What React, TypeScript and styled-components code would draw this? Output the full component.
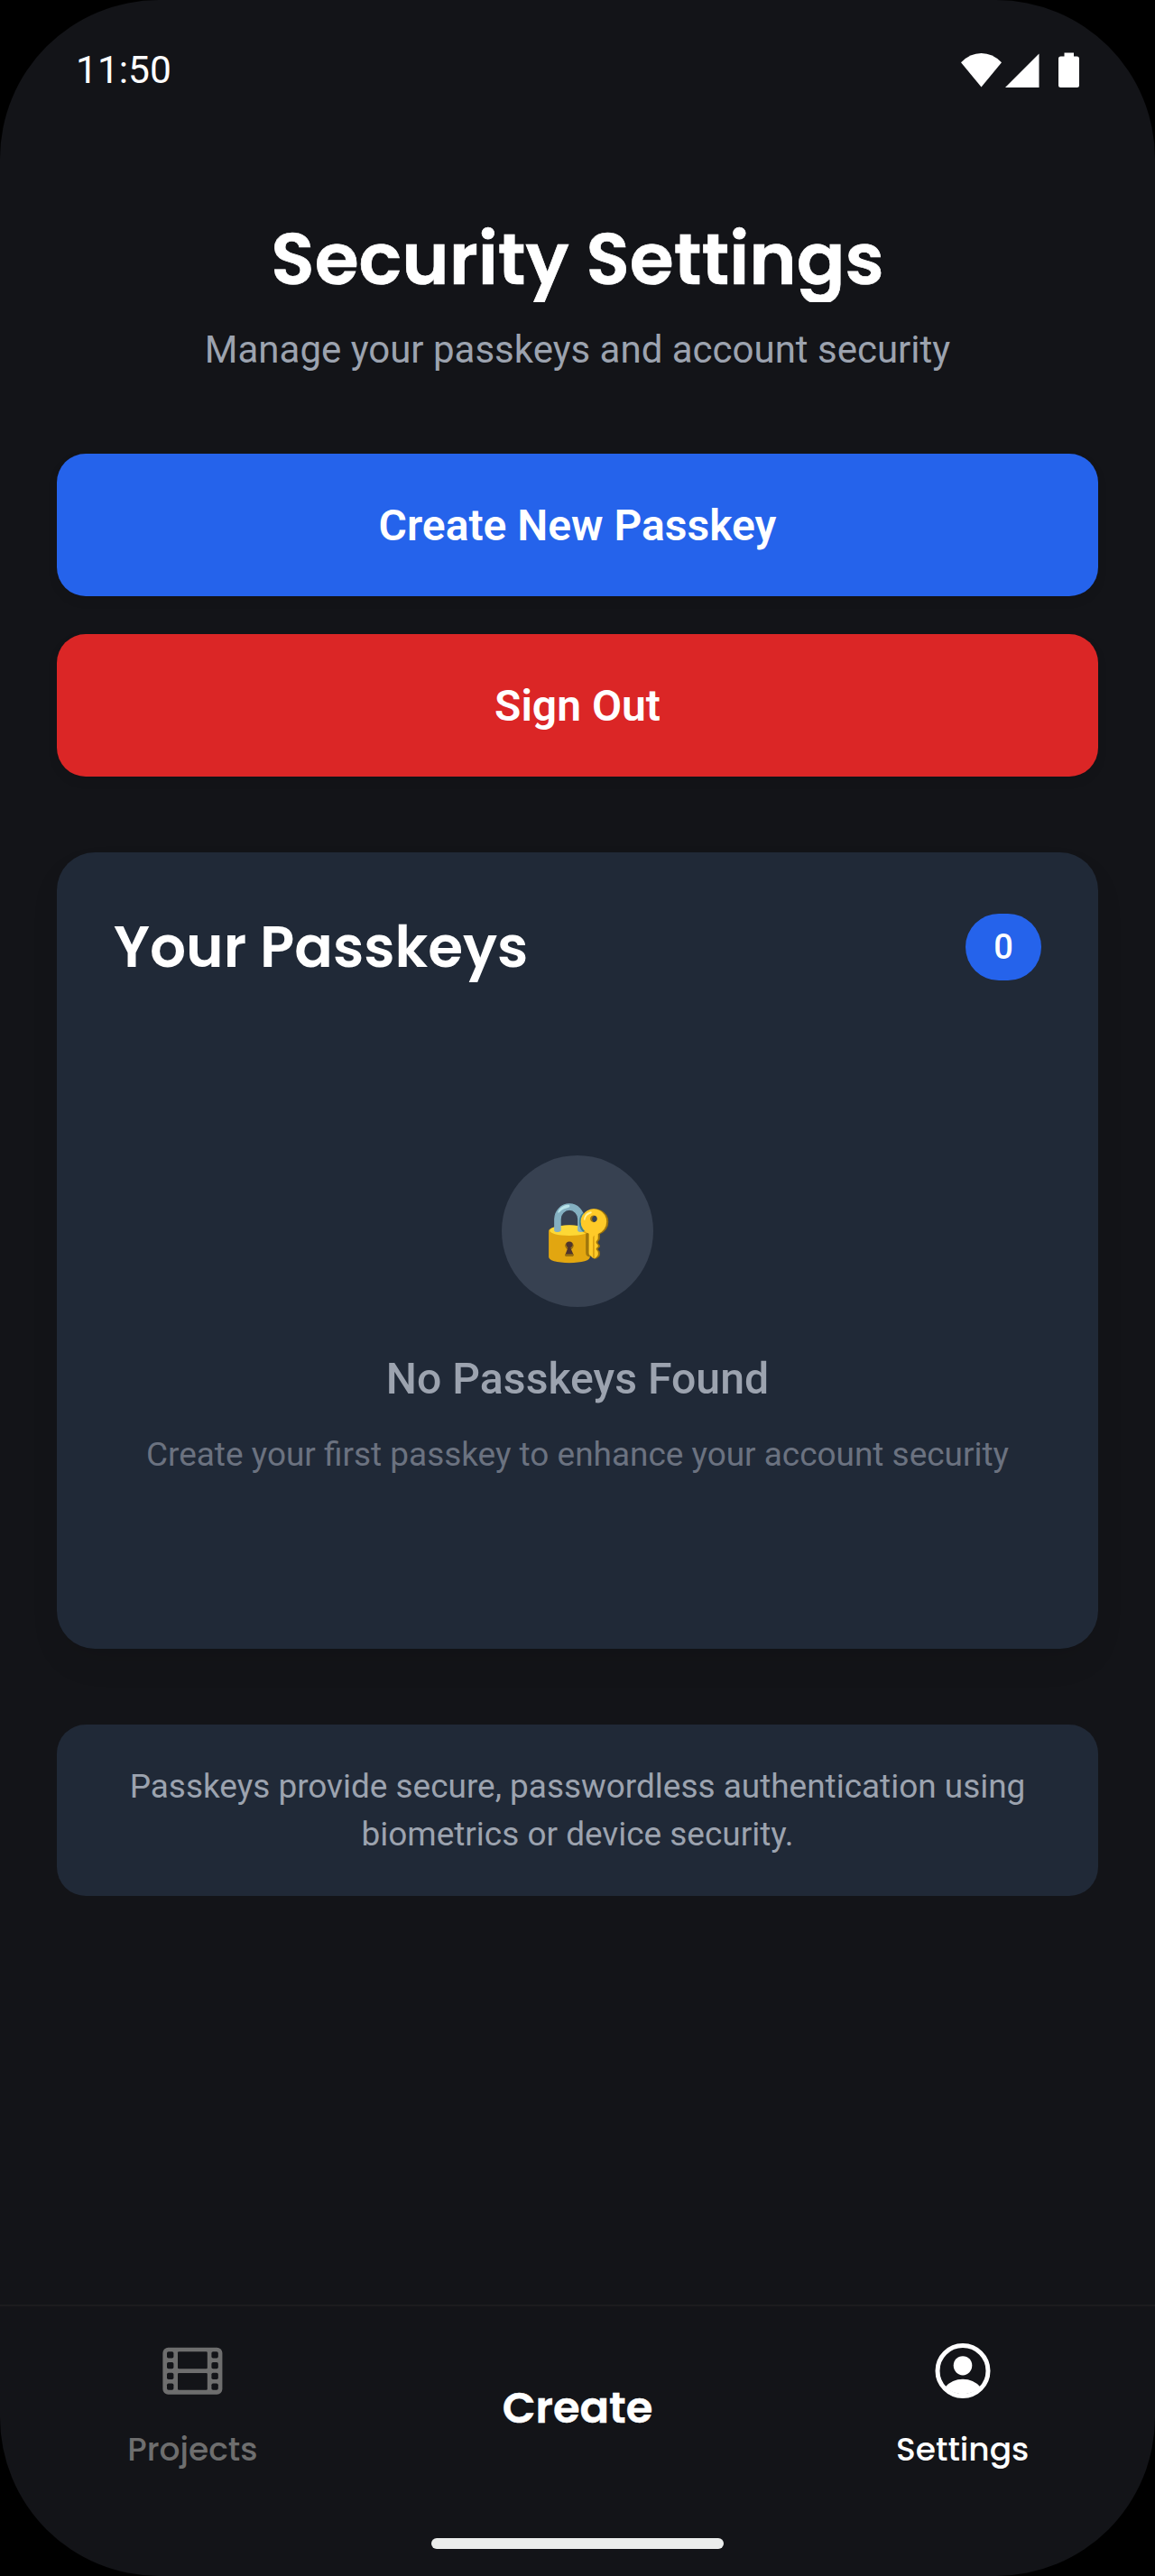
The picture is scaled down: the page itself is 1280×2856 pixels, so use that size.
import React from "react";
import styled, { createGlobalStyle } from "styled-components";

const Global = createGlobalStyle`
  * { box-sizing: border-box; margin: 0; padding: 0; }
  body { background: #000; -webkit-font-smoothing: antialiased; }
`;

const roboto = `Roboto, "Liberation Sans", sans-serif`;
const poppins = `Poppins, Inter, "Liberation Sans", sans-serif`;
const surface = "#131418";
const card = "#202937";

const Screen = styled.div`
  width: 1280px;
  height: 2856px;
  background: ${surface};
  border-radius: 176px;
  overflow: hidden;
  display: flex;
  flex-direction: column;
  font-family: ${roboto};
`;

const StatusBar = styled.header`
  height: 155px;
  padding: 0 84px;
  display: flex;
  align-items: center;
  justify-content: space-between;
  color: #fff;
`;

const Clock = styled.span`
  font-size: 42.5px;
  line-height: 50px;
`;

const Main = styled.main`
  flex: 1;
  padding: 83px 63px 0;
  display: flex;
  flex-direction: column;
`;

const Title = styled.h1`
  font-family: ${poppins};
  font-size: 79.3px;
  font-weight: 600;
  -webkit-text-stroke: 0.7px #fff;
  line-height: 99px;
  height: 97px;
  overflow: hidden;
  text-align: center;
  white-space: nowrap;
  color: #fff;
`;

const Subtitle = styled.p`
  margin-top: 25px;
  font-size: 42px;
  line-height: 55px;
  text-align: center;
  color: #9ca3af;
  white-space: nowrap;
`;

const Actions = styled.div`
  margin-top: 88px;
  display: flex;
  flex-direction: column;
  gap: 42px;
`;

const ActionButton = styled.button<{ $color: string }>`
  height: 158px;
  border: 0;
  border-radius: 32px;
  background: ${(p) => p.$color};
  color: #fff;
  font-family: ${roboto};
  font-size: 48px;
  font-weight: 600;
  line-height: 60px;
  padding-top: 2px;
  box-shadow: 0 5px 12px rgba(0, 0, 0, 0.08);
`;

const Card = styled.section`
  margin-top: 84px;
  height: 883px;
  padding: 63px;
  border-radius: 42px;
  background: ${card};
  box-shadow: 0 18px 32px rgba(0, 0, 0, 0.07);
`;

const CardHeader = styled.div`
  height: 84px;
  display: flex;
  align-items: center;
  justify-content: space-between;
`;

const CardTitle = styled.h2`
  font-family: ${poppins};
  font-size: 62.9px;
  font-weight: 600;
  line-height: 84px;
  color: #fff;
`;

const Badge = styled.span`
  width: 84px;
  height: 74px;
  padding-bottom: 1px;
  border-radius: 37px;
  background: #2563eb;
  color: #fff;
  font-size: 38px;
  font-weight: 500;
  display: flex;
  align-items: center;
  justify-content: center;
`;

const Empty = styled.div`
  margin-top: 189px;
  display: flex;
  flex-direction: column;
  align-items: center;
`;

const EmptyIcon = styled.div`
  width: 168px;
  height: 168px;
  padding: 2px 0 0 3px;
  border-radius: 50%;
  background: #374151;
  display: flex;
  align-items: center;
  justify-content: center;
  font-family: "Noto Color Emoji", sans-serif;
  font-size: 63px;
  line-height: 74px;
`;

const EmptyTitle = styled.h3`
  margin-top: 48px;
  font-size: 48.2px;
  font-weight: 500;
  line-height: 63px;
  color: #9ca3af;
`;

const EmptyText = styled.p`
  margin-top: 26px;
  font-size: 36.95px;
  line-height: 53px;
  color: #6b7280;
  white-space: nowrap;
`;

const Info = styled.p`
  margin-top: 84px;
  height: 190px;
  padding: 42px;
  border-radius: 32px;
  background: ${card};
  font-size: 36.95px;
  line-height: 53px;
  text-align: center;
  color: #9ca3af;
`;

const Nav = styled.nav`
  height: 301px;
  border-top: 2px solid #1c1c1e;
  display: flex;
  flex-direction: column;
  align-items: center;
`;

const Tabs = styled.div`
  width: 100%;
  height: 257px;
  display: grid;
  grid-template-columns: repeat(3, 1fr);
`;

const Tab = styled.div<{ $active?: boolean }>`
  padding-top: 32px;
  display: flex;
  flex-direction: column;
  align-items: center;
  gap: 26px;
  color: ${(p) => (p.$active ? "#fff" : "#6e6e6e")};
`;

const TabLabel = styled.span`
  font-family: ${poppins};
  font-size: 36px;
  font-weight: 500;
  line-height: 42px;
`;

const CreateLabel = styled.span`
  margin-top: 51px;
  font-family: ${poppins};
  font-size: 48px;
  font-weight: 600;
  -webkit-text-stroke: 0.5px #fff;
  line-height: 60px;
`;

const HomeBar = styled.div`
  width: 324px;
  height: 12px;
  border-radius: 6px;
  background: #ebedec;
`;

const StatusIcons = () => (
  <svg width="132" height="40" viewBox="0 0 132 40" fill="#fff">
    <path d="M23.5 38.5 1 11.2Q11 1 23.5 1T46 11.2Z" />
    <path d="M87.5 1.5v37.5H50Z" />
    <path d="M115.5 0.5h10.5v4h3.500q2.500 0 2.500 2.500v29.500q0 2.500-2.500 2.500h-18q-2.500 0-2.500-2.500V7q0-2.500 2.500-2.500h4Z" />
  </svg>
);

const perforationRows = [18.3, 30, 41.8, 53.4];

const FilmIcon = () => (
  <svg width="68" height="80" viewBox="-0.4 0 68 80">
    <rect x="1" y="13.7" width="66" height="52" rx="6" fill="currentColor" />
    <g fill={surface}>
      {perforationRows.map((y) => (
        <React.Fragment key={y}>
          <rect x="5.6" y={y} width="7.4" height="7.3" rx="1.8" />
          <rect x="55" y={y} width="7.4" height="7.3" rx="1.8" />
        </React.Fragment>
      ))}
      <rect x="17.6" y="18.3" width="32.800" height="19" rx="1.2" />
      <rect x="17.6" y="41.900" width="32.800" height="18.800" rx="1.2" />
    </g>
  </svg>
);

const UserIcon = () => (
  <svg width="68" height="80" viewBox="0 0 68 80">
    <circle cx="34" cy="39.500" r="28" fill="none" stroke="currentColor" strokeWidth="5" />
    <path
      d="M34 23.200c6 0 10.300 4.500 10.300 10.300S39.800 44.500 34 44.500 23.700 39.300 23.700 33.500 28 23.200 34 23.200Z"
      fill="currentColor"
    />
    <path d="M14.500 57.500Q22 48.700 34 48.700t19.500 8.800A28 28 0 0 1 14.500 57.500Z" fill="currentColor" />
  </svg>
);

export default function App() {
  return (
    <>
      <Global />
      <Screen>
        <StatusBar>
          <Clock>11:50</Clock>
          <StatusIcons />
        </StatusBar>
        <Main>
          <Title>Security Settings</Title>
          <Subtitle>Manage your passkeys and account security</Subtitle>
          <Actions>
            <ActionButton $color="#2563eb">Create New Passkey</ActionButton>
            <ActionButton $color="#db2626">Sign Out</ActionButton>
          </Actions>
          <Card>
            <CardHeader>
              <CardTitle>Your Passkeys</CardTitle>
              <Badge>0</Badge>
            </CardHeader>
            <Empty>
              <EmptyIcon>🔐</EmptyIcon>
              <EmptyTitle>No Passkeys Found</EmptyTitle>
              <EmptyText>Create your first passkey to enhance your account security</EmptyText>
            </Empty>
          </Card>
          <Info>
            Passkeys provide secure, passwordless authentication using
            <br />
            biometrics or device security.
          </Info>
        </Main>
        <Nav>
          <Tabs>
            <Tab>
              <FilmIcon />
              <TabLabel>Projects</TabLabel>
            </Tab>
            <Tab $active>
              <CreateLabel>Create</CreateLabel>
            </Tab>
            <Tab $active>
              <UserIcon />
              <TabLabel>Settings</TabLabel>
            </Tab>
          </Tabs>
          <HomeBar />
        </Nav>
      </Screen>
    </>
  );
}
